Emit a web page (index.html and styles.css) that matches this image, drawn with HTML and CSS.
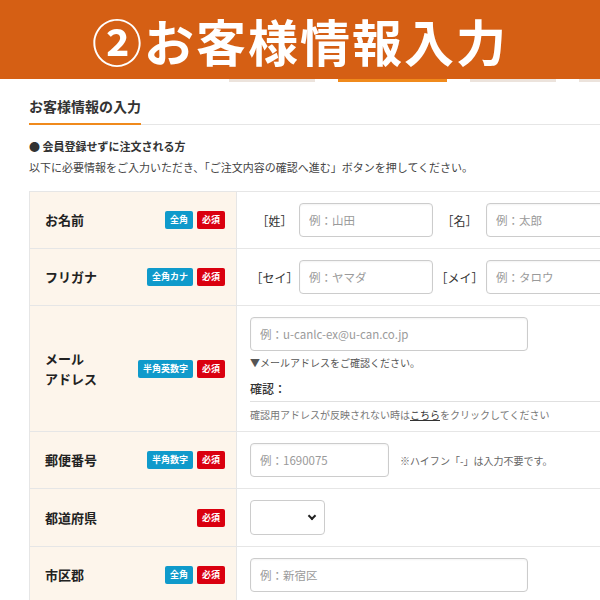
FILE: index.html
```html
<!DOCTYPE html>
<html lang="ja">
<head>
    <meta charset="UTF-8">
    <meta name="viewport" content="width=device-width, initial-scale=1.0">
    <title>お客様情報入力</title>
    <link rel="stylesheet" href="styles.css">
</head>
<body>
    <header class="banner">
        <h1>②お客様情報入力</h1>
    </header>

    <div class="steps">
        <span class="step"></span>
        <span class="step current"></span>
        <span class="step"></span>
        <span class="step last"></span>
    </div>

    <main class="content">
        <h2 class="section-title"><span>お客様情報の入力</span></h2>

        <p class="guest">● 会員登録せずに注文される方</p>
        <p class="lead">以下に必要情報をご入力いただき、「ご注文内容の確認へ進む」ボタンを押してください。</p>

        <table class="form-table">
            <tr>
                <th>
                    <div class="head">
                        <span class="label">お名前</span>
                        <span class="tags"><span class="tag blue">全角</span><span class="tag red">必須</span></span>
                    </div>
                </th>
                <td>
                    <div class="pair">
                        <span class="sub">［姓］</span>
                        <input class="field short" type="text" placeholder="例：山田">
                        <span class="sub second">［名］</span>
                        <input class="field short" type="text" placeholder="例：太郎">
                    </div>
                </td>
            </tr>
            <tr>
                <th>
                    <div class="head">
                        <span class="label">フリガナ</span>
                        <span class="tags"><span class="tag blue">全角カナ</span><span class="tag red">必須</span></span>
                    </div>
                </th>
                <td>
                    <div class="pair">
                        <span class="sub">［セイ］</span>
                        <input class="field short" type="text" placeholder="例：ヤマダ">
                        <span class="sub second">［メイ］</span>
                        <input class="field short" type="text" placeholder="例：タロウ">
                    </div>
                </td>
            </tr>
            <tr>
                <th>
                    <div class="head">
                        <span class="label">メール<br>アドレス</span>
                        <span class="tags"><span class="tag blue">半角英数字</span><span class="tag red">必須</span></span>
                    </div>
                </th>
                <td class="mail-cell">
                    <input class="field wide" type="text" placeholder="例：u-canlc-ex@u-can.co.jp">
                    <p class="note">▼メールアドレスをご確認ください。</p>
                    <p class="confirm">確認：</p>
                    <p class="hint">確認用アドレスが反映されない時は<a href="#">こちら</a>をクリックしてください</p>
                </td>
            </tr>
            <tr>
                <th>
                    <div class="head">
                        <span class="label">郵便番号</span>
                        <span class="tags"><span class="tag blue">半角数字</span><span class="tag red">必須</span></span>
                    </div>
                </th>
                <td>
                    <div class="pair">
                        <input class="field zip" type="text" placeholder="例：1690075">
                        <span class="zip-note">※ハイフン「-」は入力不要です。</span>
                    </div>
                </td>
            </tr>
            <tr>
                <th>
                    <div class="head">
                        <span class="label">都道府県</span>
                        <span class="tags"><span class="tag red">必須</span></span>
                    </div>
                </th>
                <td>
                    <div class="select-wrap">
                        <select class="pref">
                            <option></option>
                        </select>
                    </div>
                </td>
            </tr>
            <tr>
                <th>
                    <div class="head">
                        <span class="label">市区郡</span>
                        <span class="tags"><span class="tag blue">全角</span><span class="tag red">必須</span></span>
                    </div>
                </th>
                <td>
                    <input class="field wide" type="text" placeholder="例：新宿区">
                </td>
            </tr>
        </table>
    </main>
</body>
</html>
```

FILE: styles.css
```css
html, body {
    overflow: hidden;
}
body {
    margin: 0;
    width: 600px;
    height: 600px;
    font-family: "Noto Sans CJK JP", "Noto Sans", sans-serif;
    color: #333;
    background: #fff;
}

/* orange page header */
.banner {
    height: 79px;
    background-color: #d55f14;
    display: flex;
    align-items: center;
    justify-content: center;
}
.banner h1 {
    margin: 0;
    color: #fff;
    font-size: 50px;
    font-weight: bold;
    letter-spacing: 2px;
    line-height: 1;
}

/* bottom of the step tabs peeking out under the header */
.steps {
    display: flex;
    gap: 23px;
    padding-left: 229px;
    height: 3px;
}
.step {
    width: 86px;
    background-color: #ece3dc;
}
.step.current {
    width: 109px;
    background-color: #f08a1c;
}
.step.last {
    flex: 1;
}

.content {
    padding-left: 29px;
}

.section-title {
    margin: 14px 0 0;
    font-size: 14px;
    font-weight: bold;
    line-height: 20px;
    border-bottom: 1px solid #e6e6e6;
}
.section-title span {
    display: inline-block;
    padding-bottom: 7px;
    border-bottom: 2px solid #f08a1c;
    margin-bottom: -1px;
}

.guest {
    margin: 13px 0 0;
    font-size: 11px;
    font-weight: bold;
    line-height: 16px;
}
.lead {
    margin: 5px 0 0;
    font-size: 11px;
    line-height: 16px;
    color: #444;
}

/* form table */
.form-table {
    margin-top: 16px;
    width: 640px;
    border-collapse: collapse;
}
.form-table th,
.form-table td {
    border: 1px solid #e6e6e6;
}
.form-table th {
    width: 207px;
    box-sizing: border-box;
    padding: 0 11px 0 15px;
    background-color: #fdf5eb;
    text-align: left;
}
.form-table td {
    padding: 11px 13px;
}

.head {
    display: flex;
    align-items: center;
    justify-content: space-between;
}
.label {
    font-size: 13px;
    font-weight: bold;
    line-height: 20px;
    color: #222;
}
.tags {
    display: flex;
    gap: 4px;
}
.tag {
    height: 18px;
    padding: 0 5px;
    border-radius: 2px;
    font-size: 9px;
    font-weight: bold;
    line-height: 18px;
    color: #fff;
}
.tag.blue {
    background-color: #0f9acb;
}
.tag.red {
    background-color: #da000f;
}

.pair {
    display: flex;
    align-items: center;
}
.sub {
    width: 49px;
    text-align: center;
    font-size: 12px;
    color: #333;
}
.sub.second {
    width: 53px;
}

.field {
    box-sizing: border-box;
    height: 34px;
    padding: 0 9px;
    border: 1px solid #ccc;
    border-radius: 4px;
    box-shadow: inset 0 1px 2px rgba(0, 0, 0, 0.05);
    font-family: inherit;
    font-size: 11.5px;
    color: #333;
    display: block;
}
.field::placeholder {
    color: #9a9a9a;
}
.field.short {
    width: 134px;
}
.field.zip {
    width: 139px;
}
.field.wide {
    width: 278px;
}

.mail-cell {
    padding-bottom: 9px !important;
}
.mail-cell p {
    margin: 0;
}
.note {
    margin-top: 4px !important;
    font-size: 10px;
    line-height: 16px;
    color: #555;
}
.confirm {
    margin-top: 9px !important;
    padding-bottom: 3px;
    border-bottom: 1px solid #e0e0e0;
    font-size: 12px;
    font-weight: 500;
    line-height: 18px;
    color: #333;
}
.hint {
    margin-top: 5px !important;
    font-size: 10px;
    line-height: 15px;
    color: #777;
}
.hint a {
    color: #333;
    text-decoration: underline;
}

.zip-note {
    margin-left: 11px;
    font-size: 10px;
    color: #666;
}

.select-wrap {
    position: relative;
    width: 75px;
}
.pref {
    width: 75px;
    height: 35px;
    border: 1px solid #ccc;
    border-radius: 4px;
    background: #fff;
    appearance: none;
    -webkit-appearance: none;
    font-family: inherit;
}
/* small dark chevron on the select */
.select-wrap::after {
    content: "";
    position: absolute;
    right: 10px;
    top: 13px;
    width: 4px;
    height: 4px;
    border-right: 2px solid #222;
    border-bottom: 2px solid #222;
    transform: rotate(45deg);
    pointer-events: none;
}
```
